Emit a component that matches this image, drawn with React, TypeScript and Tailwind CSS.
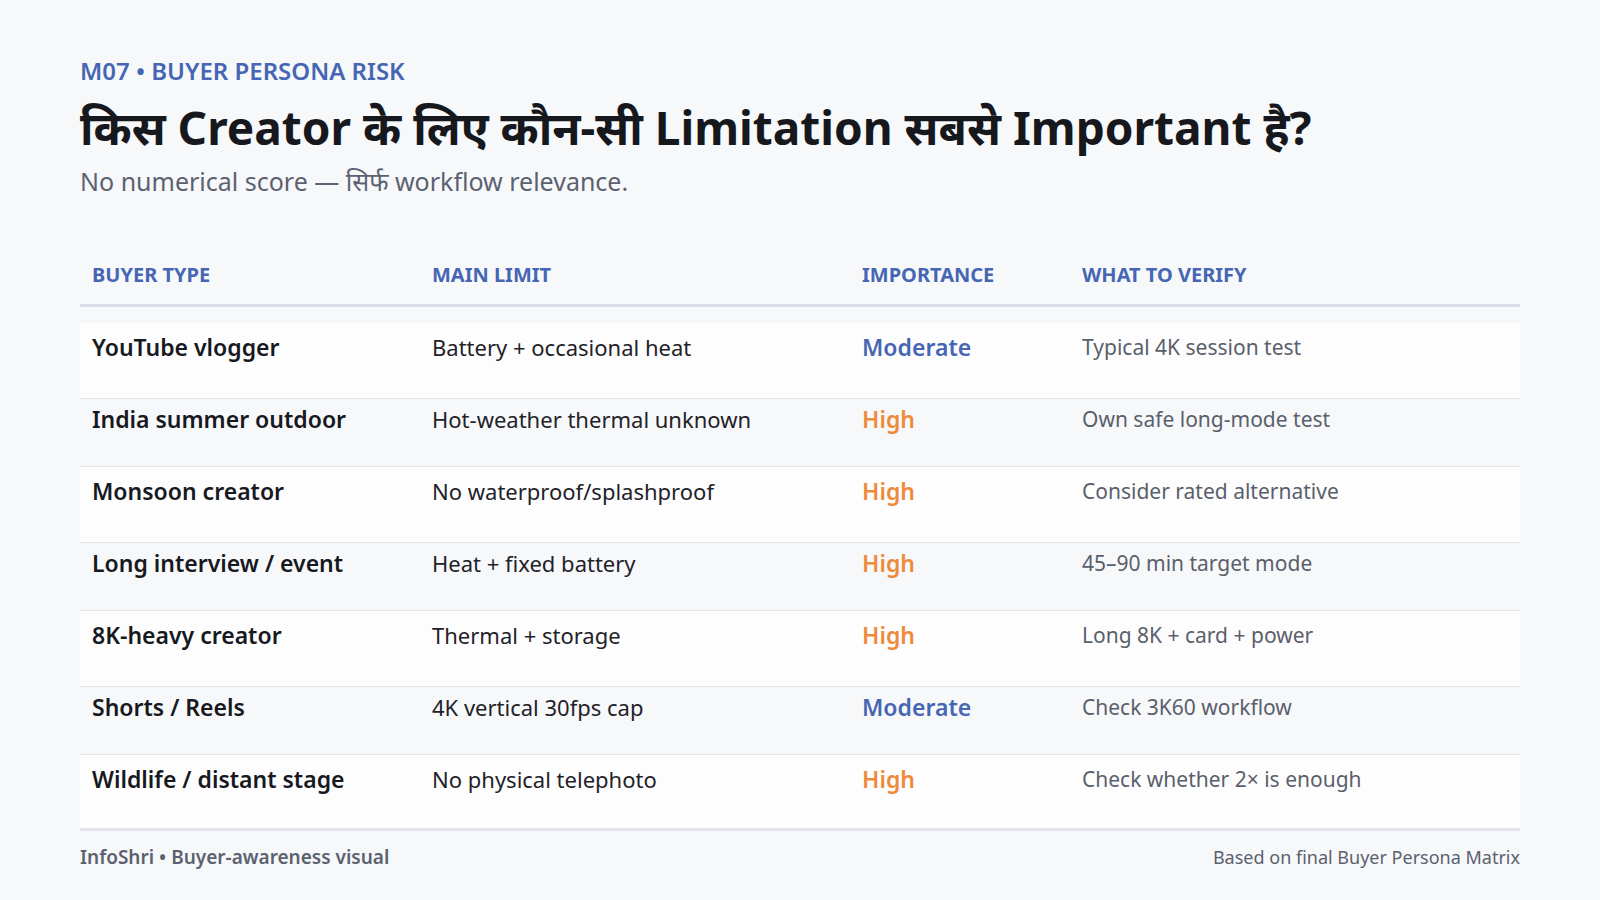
type Level = 'Moderate' | 'High';

type Row = {
  buyer: string;
  limit: string;
  level: Level;
  verify: string;
};

const rows: Row[] = [
  { buyer: 'YouTube vlogger', limit: 'Battery + occasional heat', level: 'Moderate', verify: 'Typical 4K session test' },
  { buyer: 'India summer outdoor', limit: 'Hot-weather thermal unknown', level: 'High', verify: 'Own safe long-mode test' },
  { buyer: 'Monsoon creator', limit: 'No waterproof/splashproof', level: 'High', verify: 'Consider rated alternative' },
  { buyer: 'Long interview / event', limit: 'Heat + fixed battery', level: 'High', verify: '45–90 min target mode' },
  { buyer: '8K-heavy creator', limit: 'Thermal + storage', level: 'High', verify: 'Long 8K + card + power' },
  { buyer: 'Shorts / Reels', limit: '4K vertical 30fps cap', level: 'Moderate', verify: 'Check 3K60 workflow' },
  { buyer: 'Wildlife / distant stage', limit: 'No physical telephoto', level: 'High', verify: 'Check whether 2× is enough' },
];

const cols = 'grid grid-cols-[340px_430px_220px_1fr]';

export default function App() {
  return (
    <div
      className="w-[1600px] h-[900px] bg-[#f7f8fa] px-20 pt-[54px] flex flex-col"
      style={{ fontFamily: '"Noto Sans", "Noto Sans Devanagari", "DejaVu Sans", sans-serif' }}
    >
      {/* Heading */}
      <p className="text-[24px] leading-[34px] font-semibold text-[#4666b3]">M07 • BUYER PERSONA RISK</p>
      <h1 className="mt-[9px] text-[46px] leading-[60px] font-bold text-[#16181d]">
        किस Creator के लिए कौन-सी Limitation सबसे Important है?
      </h1>
      <p className="mt-[7px] text-[25px] leading-[34px] text-[#5b6170]">
        No numerical score — सिर्फ workflow relevance.
      </p>

      {/* Table */}
      <div className="mt-[53px]">
        <div className={`${cols} h-[56px] items-center border-b-[3px] border-[#dadee8] pb-[6px]`}>
          {['BUYER TYPE', 'MAIN LIMIT', 'IMPORTANCE', 'WHAT TO VERIFY'].map((h) => (
            <div key={h} className="px-3 text-[20px] font-bold text-[#4666b3]">
              {h}
            </div>
          ))}
        </div>

        <div className="mt-[16px]">
          {rows.map((r, i) => (
            <div
              key={r.buyer}
              className={`${cols} items-start border-b border-[#e2e5ec] ${
                i % 2 === 0 ? 'h-[76px] pt-[9px] bg-[#fdfdfe]' : 'h-[68px] pt-[5px]'
              } ${i === rows.length - 1 ? 'border-b-[3px] border-[#dadee8]' : ''}`}
            >
              <div className="px-3 text-[23px] leading-[30px] font-semibold text-[#17191e]">{r.buyer}</div>
              <div className="px-3 text-[22px] leading-[30px] text-[#1f2228]">{r.limit}</div>
              <div
                className={`px-3 text-[23px] leading-[30px] font-semibold ${
                  r.level === 'High' ? 'text-[#ee8a3c]' : 'text-[#4666b3]'
                }`}
              >
                {r.level}
              </div>
              <div className="px-3 text-[21px] leading-[30px] text-[#5a5f6b]">{r.verify}</div>
            </div>
          ))}
        </div>
      </div>

      {/* Footer */}
      <div className="mt-[12px] flex items-center justify-between">
        <p className="text-[19px] font-semibold text-[#5b6170]">InfoShri • Buyer-awareness visual</p>
        <p className="text-[18px] text-[#5b6170]">Based on final Buyer Persona Matrix</p>
      </div>
    </div>
  );
}
